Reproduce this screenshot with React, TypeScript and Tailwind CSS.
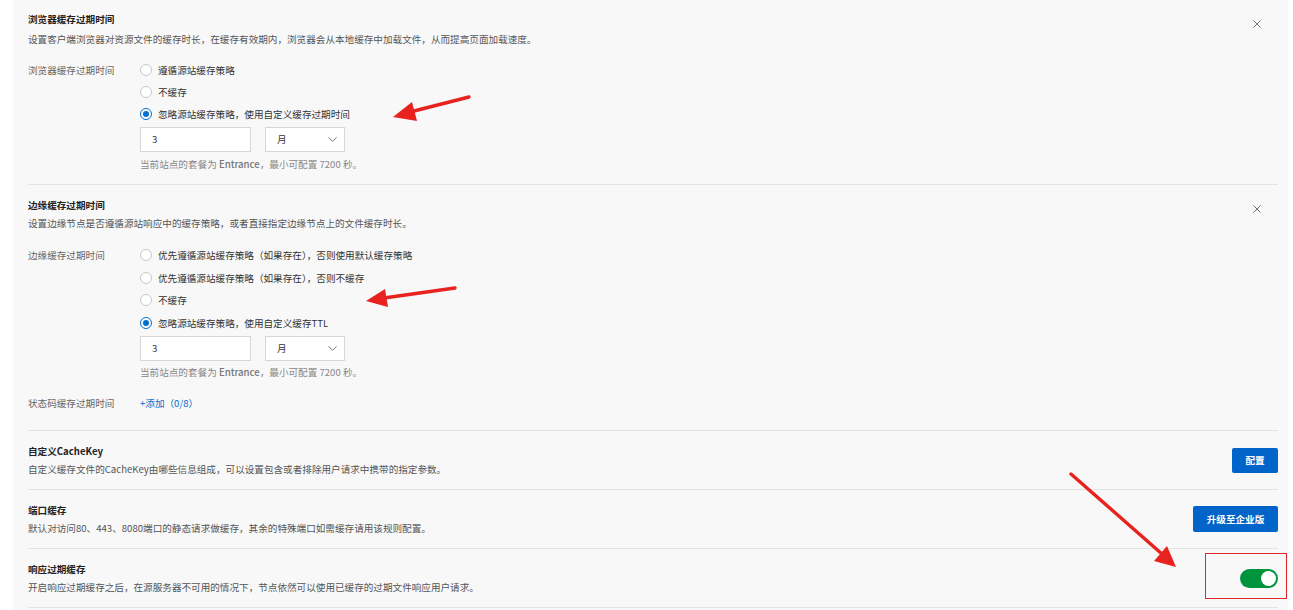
import React from 'react';
import { ChevronDown } from 'lucide-react';

const font = { fontFamily: '"Noto Sans CJK SC", "Noto Sans", sans-serif' };

function Radio({ checked, label }: { checked?: boolean; label: string }) {
  return (
    <div className="flex items-center h-full">
      <span
        className={`w-[12px] h-[12px] rounded-full border flex items-center justify-center bg-white ${
          checked ? 'border-[#0070cc]' : 'border-[#c8c8c8]'
        }`}
      >
        {checked && <span className="w-[6px] h-[6px] rounded-full bg-[#0070cc]" />}
      </span>
      <span className="ml-[6px] text-[#333]">{label}</span>
    </div>
  );
}

function CloseX() {
  return (
    <svg width="8" height="8" viewBox="0 0 8 8" className="shrink-0">
      <path d="M0.5 0.5 L7.5 7.5 M7.5 0.5 L0.5 7.5" stroke="#6b7280" strokeWidth="1" />
    </svg>
  );
}

function TimeInputs() {
  return (
    <div className="flex items-center gap-[14px]">
      <div className="w-[111px] h-[25px] border border-[#d6d6d6] bg-white flex items-center pl-[11px] text-[#333]">3</div>
      <div className="w-[80px] h-[25px] border border-[#d6d6d6] bg-white flex items-center justify-between pl-[11px] pr-[4px] text-[#333]">
        <span>月</span>
        <ChevronDown size={15} strokeWidth={1.3} color="#555" />
      </div>
    </div>
  );
}

function Hint() {
  return (
    <div className="leading-[18px] text-[#888]">
      当前站点的套餐为 <span className="font-medium text-[#777]">Entrance</span>，最小可配置 7200 秒。
    </div>
  );
}

function SimpleRow({ title, desc, children }: { title: string; desc: string; children: React.ReactNode }) {
  return (
    <div className="flex items-center justify-between border-b border-[#e3e3e3] pt-[11px] pb-[11px]">
      <div>
        <div className="leading-[18px] font-bold text-[#222]">{title}</div>
        <div className="leading-[18px] text-[#555]">{desc}</div>
      </div>
      {children}
    </div>
  );
}

export default function App() {
  return (
    <div className="relative flex w-[1293px] h-[610px] overflow-hidden bg-white text-[9.6px]" style={font}>
      <div className="w-[13px] shrink-0 bg-white" />
      <div className="w-[1275px] shrink-0 bg-[#f8f8f8] pl-[15px] pr-[10px]">
        {/* 浏览器缓存过期时间 */}
        <div className="border-b border-[#e3e3e3] pt-[10px] pb-[11px]">
          <div className="flex justify-between">
            <div>
              <div className="leading-[18px] font-bold text-[#222]">浏览器缓存过期时间</div>
              <div className="mt-[2px] leading-[18px] text-[#555]">
                设置客户端浏览器对资源文件的缓存时长，在缓存有效期内，浏览器会从本地缓存中加载文件，从而提高页面加载速度。
              </div>
            </div>
            <div className="mt-[10px] mr-[17px]"><CloseX /></div>
          </div>
          <div className="mt-[11px] flex">
            <div className="w-[112px] h-[22px] leading-[22px] text-[#666]">浏览器缓存过期时间</div>
            <div>
              <div className="h-[22px]"><Radio label="遵循源站缓存策略" /></div>
              <div className="h-[22px]"><Radio label="不缓存" /></div>
              <div className="h-[22px]"><Radio checked label="忽略源站缓存策略，使用自定义缓存过期时间" /></div>
              <div className="mt-[2px]"><TimeInputs /></div>
              <div className="mt-[3px]"><Hint /></div>
            </div>
          </div>
        </div>

        {/* 边缘缓存过期时间 */}
        <div className="border-b border-[#e3e3e3] pt-[11px] pb-[16px]">
          <div className="flex justify-between">
            <div>
              <div className="leading-[18px] font-bold text-[#222]">边缘缓存过期时间</div>
              <div className="leading-[18px] text-[#555]">
                设置边缘节点是否遵循源站响应中的缓存策略，或者直接指定边缘节点上的文件缓存时长。
              </div>
            </div>
            <div className="mt-[9px] mr-[17px]"><CloseX /></div>
          </div>
          <div className="mt-[12px] flex">
            <div className="w-[112px] h-[22px] leading-[22px] text-[#666]">边缘缓存过期时间</div>
            <div>
              <div className="h-[22.5px]"><Radio label="优先遵循源站缓存策略（如果存在），否则使用默认缓存策略" /></div>
              <div className="h-[22.5px]"><Radio label="优先遵循源站缓存策略（如果存在），否则不缓存" /></div>
              <div className="h-[22.5px]"><Radio label="不缓存" /></div>
              <div className="h-[22.5px]"><Radio checked label="忽略源站缓存策略，使用自定义缓存TTL" /></div>
              <div className="mt-[2px]"><TimeInputs /></div>
              <div className="mt-[2px]"><Hint /></div>
            </div>
          </div>
          <div className="mt-[11px] flex h-[22px] items-center">
            <div className="w-[112px] text-[#666]">状态码缓存过期时间</div>
            <div className="text-[#0070cc]">+添加（0/8）</div>
          </div>
        </div>

        <SimpleRow
          title="自定义CacheKey"
          desc="自定义缓存文件的CacheKey由哪些信息组成，可以设置包含或者排除用户请求中携带的指定参数。"
        >
          <button className="h-[25px] w-[46px] rounded-[2px] bg-[#0064c8] text-white font-semibold">配置</button>
        </SimpleRow>
        <SimpleRow
          title="端口缓存"
          desc="默认对访问80、443、8080端口的静态请求做缓存，其余的特殊端口如需缓存请用该规则配置。"
        >
          <button className="h-[26px] w-[85px] rounded-[2px] bg-[#0064c8] text-white font-semibold">升级至企业版</button>
        </SimpleRow>
        <SimpleRow
          title="响应过期缓存"
          desc="开启响应过期缓存之后，在源服务器不可用的情况下，节点依然可以使用已缓存的过期文件响应用户请求。"
        >
          <div className="w-[38px] h-[19px] rounded-full bg-[#00953c] flex items-center justify-end pr-[2px]">
            <span className="w-[15px] h-[15px] rounded-full bg-white" />
          </div>
        </SimpleRow>
      </div>
      <div className="flex-1 bg-white" />

      {/* annotations */}
      <div className="absolute left-[1205px] top-[553px] w-[82px] h-[46px] border border-[#e0262b] pointer-events-none" />
      <svg className="absolute inset-0 pointer-events-none" width="1293" height="610">
        <g stroke="#e8221f" strokeWidth="3.4" strokeLinecap="round" fill="#e8221f">
          <line x1="469" y1="97" x2="410" y2="112" />
          <polygon points="393,117 412,102 417,121" stroke="none" />
          <line x1="455" y1="288" x2="384" y2="298" />
          <polygon points="366,301 385,289 388,307" stroke="none" />
          <line x1="1071" y1="474" x2="1162" y2="554" />
          <polygon points="1176,567 1154,561 1167,546" stroke="none" />
        </g>
      </svg>
    </div>
  );
}
